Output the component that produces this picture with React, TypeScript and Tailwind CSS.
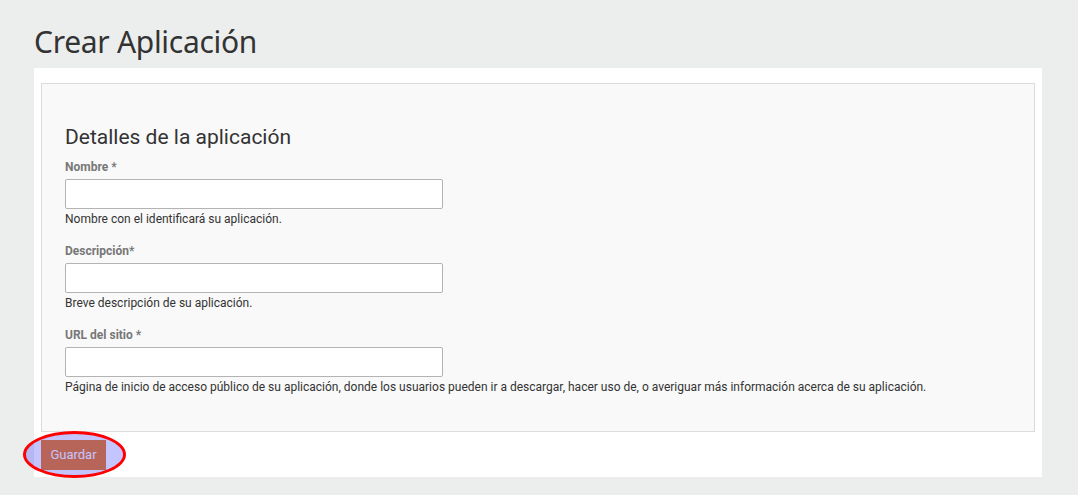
import React from "react";

const Field = ({ label, help, first }: { label: string; help: string; first?: boolean }) => (
  <div className={first ? "mt-[10px]" : "mt-[16px]"}>
    <div className="text-[12px] leading-[16px] font-bold text-[#777]">{label}</div>
    <input
      type="text"
      className="mt-[4px] block h-[30px] w-[378px] rounded-[2px] border border-[#b3b3b3] bg-white outline-none"
    />
    <div className="mt-[2px] text-[12px] leading-[16px] text-[#333]">{help}</div>
  </div>
);

export default function App() {
  return (
    <div
      className="relative min-h-screen bg-[#eceeed] pl-[34px] pr-[36px] pt-[22px]"
      style={{ fontFamily: "Roboto, 'Liberation Sans', sans-serif" }}
    >
      <h1
        className="h-[46px] text-[30px] leading-[40px] text-[#333] tracking-[-0.3px]"
        style={{ fontFamily: "'Noto Sans', 'Open Sans', sans-serif" }}
      >
        Crear Aplicación
      </h1>
      <div className="bg-white px-[7px] pt-[15px] pb-[7px]">
        <div className="border border-[#dcdcdc] bg-[#f9f9f9] pl-[23px] pt-[41px] pb-[36px]">
          <h2 className="text-[21px] leading-[24px] text-[#333]">Detalles de la aplicación</h2>
          <Field first label="Nombre *" help="Nombre con el identificará su aplicación." />
          <Field label="Descripción*" help="Breve descripción de su aplicación." />
          <Field
            label="URL del sitio *"
            help="Página de inicio de acceso público de su aplicación, donde los usuarios pueden ir a descargar, hacer uso de, o averiguar más información acerca de su aplicación."
          />
        </div>
        <button className="mt-[8px] block h-[30px] w-[65px] bg-[#ef8228] text-[13px] text-white">
          Guardar
        </button>
      </div>
      <div className="pointer-events-none absolute left-[23px] top-[431px] h-[47px] w-[103px] rounded-[50%] border-[3px] border-[#f00] bg-[rgba(0,0,255,0.23)]" />
    </div>
  );
}
